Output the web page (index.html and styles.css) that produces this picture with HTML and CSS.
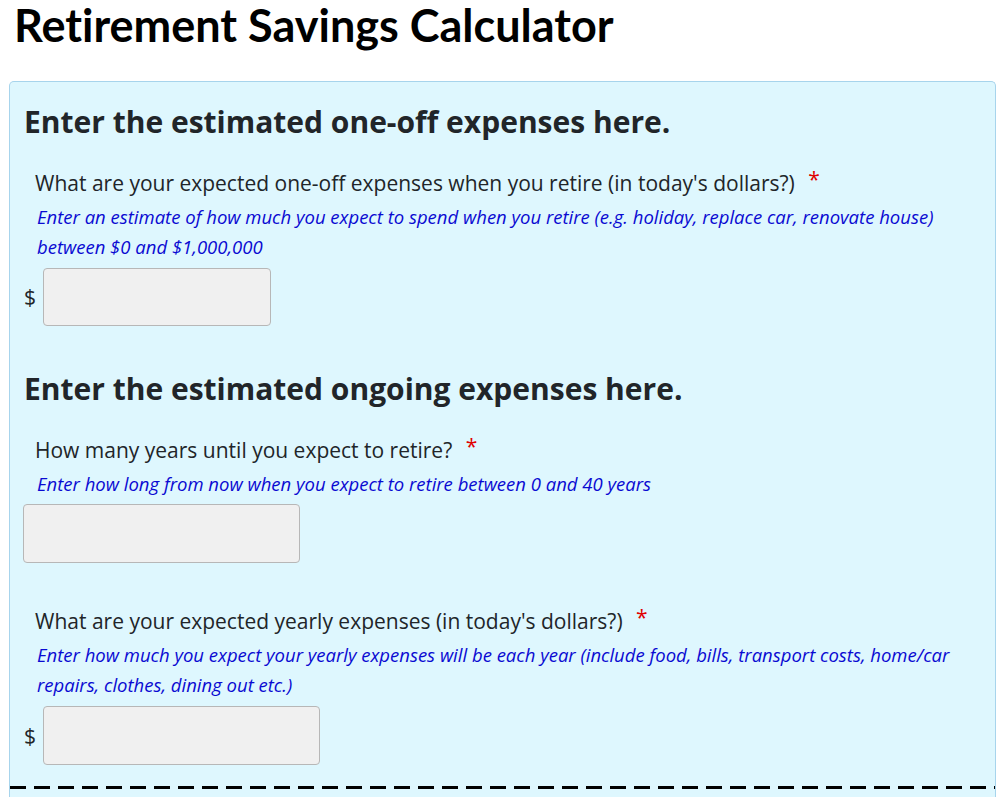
FILE: index.html
```html
<!DOCTYPE html>
<html lang="en">
<head>
  <meta charset="UTF-8" />
  <meta name="viewport" content="width=device-width, initial-scale=1.0" />
  <title>Retirement Savings Calculator</title>
  <link rel="stylesheet" href="styles.css">
</head>
<body>
  <h1 class="title">Retirement Savings Calculator</h1>

  <div class="panel">
    <h2 class="section-head">Enter the estimated one-off expenses here.</h2>

    <div class="question">
      <label class="q-label" for="oneOff">What are your expected one-off expenses when you retire (in today's dollars?) <span class="req">*</span></label>
      <div class="q-hint">Enter an estimate of how much you expect to spend when you retire (e.g. holiday, replace car, renovate house) between $0 and $1,000,000</div>
      <div class="money-row">
        <span class="dollar">$</span>
        <input id="oneOff" class="field field-short" type="text" />
      </div>
    </div>

    <h2 class="section-head second">Enter the estimated ongoing expenses here.</h2>

    <div class="question">
      <label class="q-label" for="years">How many years until you expect to retire? <span class="req">*</span></label>
      <div class="q-hint">Enter how long from now when you expect to retire between 0 and 40 years</div>
      <input id="years" class="field field-plain" type="text" />
    </div>

    <div class="question spaced">
      <label class="q-label" for="yearly">What are your expected yearly expenses (in today's dollars?) <span class="req">*</span></label>
      <div class="q-hint">Enter how much you expect your yearly expenses will be each year (include food, bills, transport costs, home/car repairs, clothes, dining out etc.)</div>
      <div class="money-row">
        <span class="dollar">$</span>
        <input id="yearly" class="field" type="text" />
      </div>
    </div>

    <div class="divider"></div>
  </div>
</body>
</html>
```

FILE: styles.css
```css
body {
  margin: 0 10px 0 9px;
  background: #fff;
  font-family: "Open Sans", "Noto Sans", sans-serif;
  color: #212529;
}
.title {
  font-family: Lato, "Open Sans", sans-serif;
  font-variant-ligatures: none;
  font-weight: bold;
  font-size: 45px;
  line-height: 50px;
  margin: 0 0 0 5px;
  padding-top: 0;
  color: #000;
  height: 81px;
  box-sizing: border-box;
}
.panel {
  background: #def7fe;
  border: 1px solid #a7d4ec;
  border-bottom: none;
  border-radius: 5px 5px 0 0;
  padding: 22px 0 8px 0;
}
.section-head {
  margin: 0 0 0 14px;
  font-size: 30px;
  line-height: 36px;
  font-weight: bold;
}
.section-head.second {
  margin-top: 45px;
}
.question {
  margin-top: 28px;
}
.question.spaced {
  margin-top: 43px;
}
.q-label {
  display: block;
  margin-left: 25px;
  font-size: 21px;
  line-height: 30px;
}
.req {
  color: #e00000;
  margin-left: 8px;
  position: relative;
  top: -4px;
}
.q-hint {
  margin: 4px 30px 0 27px;
  font-style: italic;
  font-size: 18.5px;
  line-height: 30px;
  color: #0a0ad2;
}
.money-row {
  display: flex;
  align-items: center;
  margin: 6px 0 0 14px;
}
.dollar {
  font-size: 21px;
  width: 19px;
}
.field {
  width: 277px;
  height: 59px;
  box-sizing: border-box;
  background: #f0f0f0;
  border: 1px solid #b7b7b7;
  border-radius: 4px;
  margin: 0;
}
.field-short {
  width: 228px;
  height: 58px;
}
.field-plain {
  display: block;
  margin: 5px 0 0 13px;
  height: 59px;
}
.divider {
  margin-top: 21px;
  height: 3px;
  background: repeating-linear-gradient(to right, #000 0 16px, transparent 16px 24px);
}
```
